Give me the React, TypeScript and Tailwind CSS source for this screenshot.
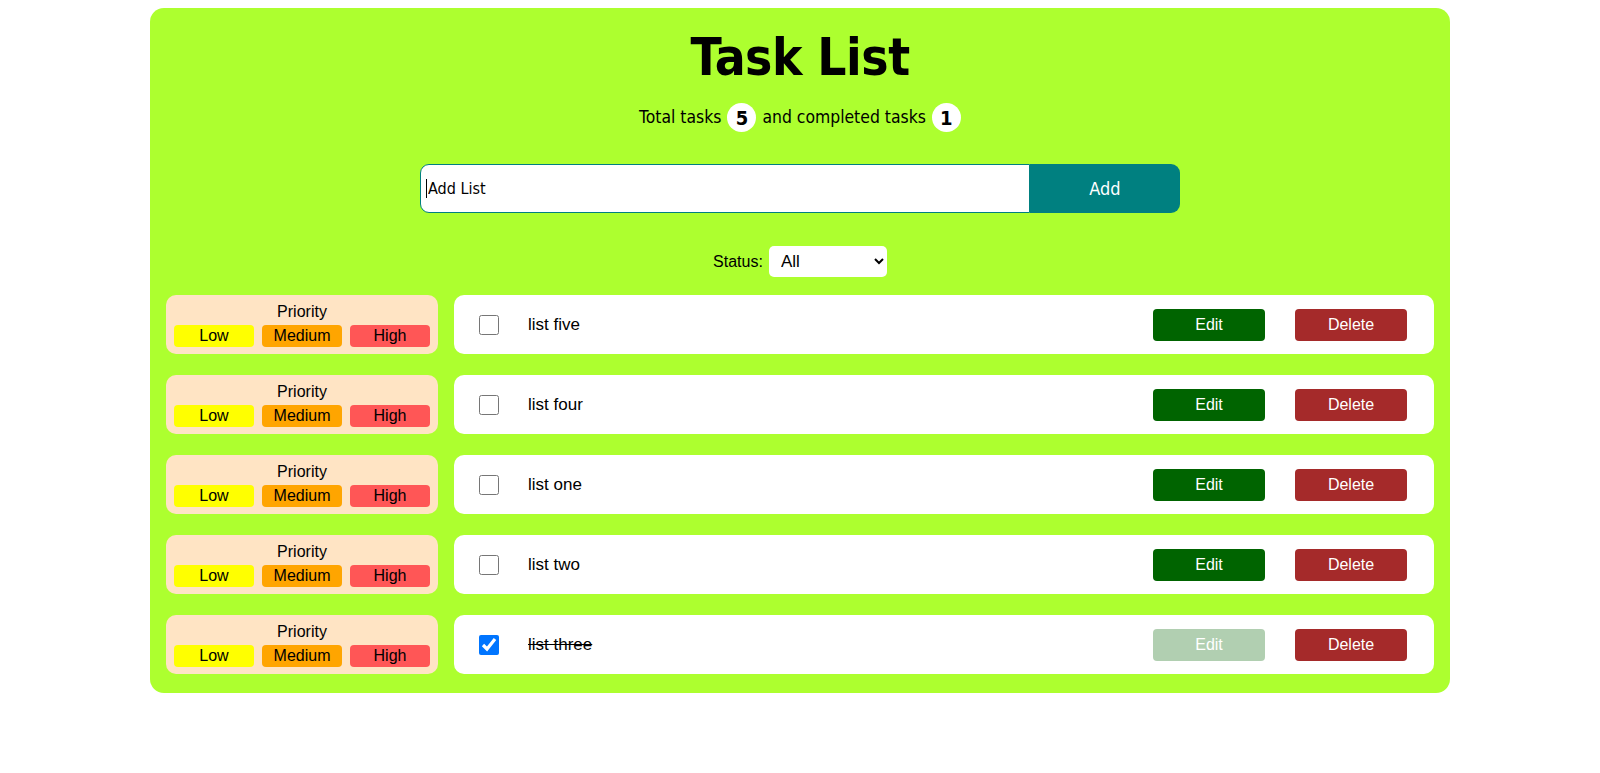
import React, { useState } from 'react';

interface Task {
  id: number;
  title: string;
  done: boolean;
}

const initialTasks: Task[] = [
  { id: 5, title: 'list five', done: false },
  { id: 4, title: 'list four', done: false },
  { id: 1, title: 'list one', done: false },
  { id: 2, title: 'list two', done: false },
  { id: 3, title: 'list three', done: true },
];

const tahoma = "font-['DejaVu_Sans_Condensed','DejaVu_Sans',sans-serif]";

const App: React.FC = () => {
  const [tasks, setTasks] = useState<Task[]>(initialTasks);
  const [text, setText] = useState('');
  const [status, setStatus] = useState('all');

  const completed = tasks.filter(t => t.done).length;

  const toggle = (id: number) => {
    setTasks(tasks.map(t => (t.id === id ? { ...t, done: !t.done } : t)));
  };

  const remove = (id: number) => {
    setTasks(tasks.filter(t => t.id !== id));
  };

  const handleSubmit = (e: React.FormEvent) => {
    e.preventDefault();
    if (!text.trim()) return;
    setTasks([{ id: Date.now(), title: text.trim(), done: false }, ...tasks]);
    setText('');
  };

  const visible = tasks.filter(t =>
    status === 'all' ? true : status === 'done' ? t.done : !t.done
  );

  return (
    <div className="min-h-screen bg-white pt-2 font-['Liberation_Sans',Arial,sans-serif] text-black">
      <div className="mx-auto w-[1300px] rounded-[14px] bg-[#adff2f] px-4 pb-[19px] pt-6">
        <h1 className={`${tahoma} text-center text-[51px] font-bold leading-[51px] tracking-[-0.5px]`}>
          Task List
        </h1>

        {/* Counters */}
        <div className={`${tahoma} mt-5 flex h-[29px] items-center justify-center gap-[6px] text-[17.4px]`}>
          <span>Total tasks</span>
          <span className="flex h-[29px] w-[29px] items-center justify-center rounded-full bg-white text-[20px] font-bold">
            {tasks.length}
          </span>
          <span>and completed tasks</span>
          <span className="flex h-[29px] w-[29px] items-center justify-center rounded-full bg-white text-[20px] font-bold">
            {completed}
          </span>
        </div>

        {/* Add form */}
        <form onSubmit={handleSubmit} className="mx-auto mt-8 flex h-[49px] w-[760px]">
          <div className="relative flex-1">
            <input
              type="text"
              value={text}
              onChange={e => setText(e.target.value)}
              placeholder="Add List"
              className={`${tahoma} h-full w-full rounded-l-[9px] border border-[#008080] bg-white pl-[7px] text-[16px] text-black outline-none placeholder:text-black`}
            />
            {text === '' && (
              <span className="pointer-events-none absolute left-[6px] top-[15px] h-[19px] w-px bg-black" />
            )}
          </div>
          <button
            type="submit"
            className={`${tahoma} w-[150px] rounded-r-[9px] bg-[#008080] text-[18px] text-white`}
          >
            Add
          </button>
        </form>

        {/* Filter */}
        <div className="mt-[33px] flex h-[31px] items-center justify-center gap-1.5 text-[16px]">
          <label htmlFor="status">Status:</label>
          <select
            id="status"
            value={status}
            onChange={e => setStatus(e.target.value)}
            className="h-[31px] w-[118px] rounded-[5px] border-0 bg-white pl-2 pr-1 text-[17px] text-black"
          >
            <option value="all">All</option>
            <option value="done">Completed</option>
            <option value="open">Pending</option>
          </select>
        </div>

        {/* Tasks */}
        <ul className="mt-[18px] flex flex-col gap-[21px]">
          {visible.map(task => (
            <li key={task.id} className="flex items-start gap-4">
              <div className="flex h-[59px] w-[272px] flex-col items-center rounded-[10px] bg-[#ffe4c4] px-2 pt-[8px]">
                <span className="text-[16px] leading-[18px]">Priority</span>
                <div className="mt-[4px] flex w-full gap-2">
                  <button className="h-[22px] w-[80px] rounded-[4px] bg-[#ffff00] text-[16px] leading-[22px]">Low</button>
                  <button className="h-[22px] w-[80px] rounded-[4px] bg-[#ffa500] text-[16px] leading-[22px]">Medium</button>
                  <button className="h-[22px] w-[80px] rounded-[4px] bg-[#ff5656] text-[16px] leading-[22px]">High</button>
                </div>
              </div>

              <div className="flex h-[59px] flex-1 items-center rounded-[10px] bg-white pl-[25px] pr-[27px]">
                <input
                  type="checkbox"
                  checked={task.done}
                  onChange={() => toggle(task.id)}
                  className="m-0 h-5 w-5"
                />
                <span className={`ml-[29px] flex-1 text-[17px] ${task.done ? 'line-through' : ''}`}>
                  {task.title}
                </span>
                <button
                  disabled={task.done}
                  className={`h-8 w-[112px] rounded-[4px] bg-[#006400] text-[16px] text-white ${task.done ? 'opacity-30' : ''}`}
                >
                  Edit
                </button>
                <button
                  onClick={() => remove(task.id)}
                  className="ml-[30px] h-8 w-[112px] rounded-[4px] bg-[#a52a2a] text-[16px] text-white"
                >
                  Delete
                </button>
              </div>
            </li>
          ))}
        </ul>
      </div>
    </div>
  );
};

export default App;
